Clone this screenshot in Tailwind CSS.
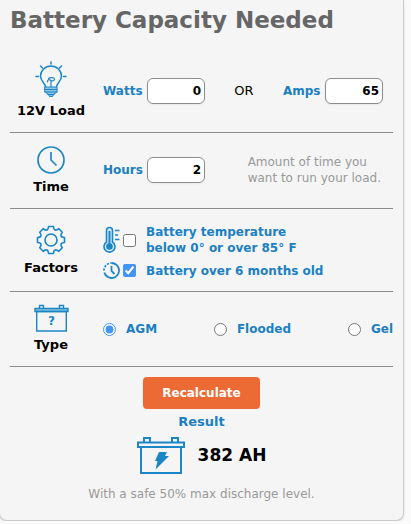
<!DOCTYPE html>
<html lang="en">
<head>
    <meta charset="UTF-8">
    <meta name="viewport" content="width=device-width, initial-scale=1.0">
    <title>Battery Capacity Calculator</title>
    <script src="https://cdn.jsdelivr.net/npm/@tailwindcss/browser@4"></script>
</head>
<body class="bg-[#fafafa] font-['Verdana','DejaVu_Sans',sans-serif] text-xs text-black">

    <form class="-ml-px mr-[7px] rounded-b-lg border border-t-0 border-[#cccccc] bg-[#f5f5f5] px-[10px] pb-[18px] shadow-sm">
        <h1 class="pt-1 text-[23px] leading-8 font-bold whitespace-nowrap text-[#666666]">Battery Capacity Needed</h1>

        <!-- Load -->
        <section class="flex h-[97px] items-end border-b border-[#8c8c8c] pb-2">
            <div class="flex w-[82px] flex-col items-center">
                <svg class="h-[37px] w-8" viewBox="0 0 32 37" fill="none" stroke="#1b86c7" stroke-width="1.5" stroke-linecap="round">
                    <path d="M16 1v2M5.500 5l2 2M26.500 5l-2 2M1 15.500h2.500M28.500 15.500H31"/>
                    <path d="M10.500 26c0-4-5-5.500-5-11a10.500 10 0 0 1 21 0c0 5.500-5 7-5 11"/>
                    <path d="M16 26v-6M12.500 21c0-3 2-2.500 3.500-1.500s3.500 0 3.500-1.500-4-2-6-.5" stroke-width="1.200"/>
                    <path d="M10 26h12v5l-3 2-1.500 2.500h-3L13 33l-3-2z" fill="#8fc4e4" stroke-width="1"/>
                    <path d="M10 28.500h12M10 31h12M13 33.500h6" stroke-width="1.200"/>
                </svg>
                <h2 class="text-[13px] leading-[26px] font-bold whitespace-nowrap">12V Load</h2>
            </div>
            <div class="mb-5 ml-[11px] flex flex-1 items-center justify-between pr-[10px]">
                <div class="flex items-center">
                    <label for="watts" class="w-11 font-bold text-[#1b80c2]">Watts</label>
                    <input id="watts" type="text" value="0" class="h-[26px] w-[58px] rounded-md border border-[#8c8c8c] bg-white px-[3px] text-right font-bold shadow-xs">
                </div>
                <span class="text-[13px]">OR</span>
                <div class="flex items-center">
                    <label for="amps" class="w-[42px] font-bold text-[#1b80c2]">Amps</label>
                    <input id="amps" type="text" value="65" class="h-[26px] w-[58px] rounded-md border border-[#8c8c8c] bg-white px-[3px] text-right font-bold shadow-xs">
                </div>
            </div>
        </section>

        <!-- Time -->
        <section class="flex h-[76px] items-end border-b border-[#8c8c8c] pb-2">
            <div class="flex w-[82px] flex-col items-center">
                <svg class="size-7" viewBox="0 0 28 28" fill="none" stroke="#1b86c7" stroke-width="1.7">
                    <circle cx="14" cy="14" r="13"/>
                    <path d="M14 6v8l5.500 5.500"/>
                </svg>
                <h2 class="text-[13px] leading-[26px] font-bold">Time</h2>
            </div>
            <div class="mb-[14px] ml-[11px] flex flex-1 items-center justify-between pr-3">
                <div class="flex items-center">
                    <label for="hours" class="w-11 font-bold text-[#1b80c2]">Hours</label>
                    <input id="hours" type="text" value="2" class="h-[26px] w-[58px] rounded-md border border-[#8c8c8c] bg-white px-[3px] text-right font-bold shadow-xs">
                </div>
                <p class="leading-4 whitespace-nowrap text-[#999999]">Amount of time you<br>want to run your load.</p>
            </div>
        </section>

        <!-- Factors -->
        <section class="flex h-[83px] items-end border-b border-[#8c8c8c] pb-[10px]">
            <div class="flex w-[82px] flex-col items-center">
                <svg class="size-[30px]" viewBox="-15 -15 30 30" fill="none" stroke="#1b86c7" stroke-width="1.600" stroke-linejoin="round">
                    <path d="M-2.500-13.500L2.500-13.500Q2.500-10.800 4-10Q5.600-9.500 7.800-11.300L11.300-7.800Q9.500-5.600 10-4Q10.800-2.500 13.500-2.500L13.500 2.500Q10.800 2.500 10 4Q9.500 5.600 11.300 7.800L7.800 11.300Q5.600 9.500 4 10Q2.500 10.800 2.500 13.500L-2.500 13.500Q-2.500 10.800-4 10Q-5.600 9.500-7.800 11.300L-11.300 7.800Q-9.500 5.600-10 4Q-10.800 2.500-13.500 2.500L-13.500-2.500Q-10.800-2.500-10-4Q-9.500-5.600-11.300-7.800L-7.800-11.300Q-5.600-9.500-4-10Q-2.500-10.800-2.500-13.500z"/>
                    <circle cx="0" cy="0" r="6"/>
                </svg>
                <h2 class="text-[13px] leading-[26px] font-bold">Factors</h2>
            </div>
            <div class="mb-[2px] ml-[11px] flex flex-1 flex-col gap-[6px]">
                <div class="flex items-center">
                    <svg class="h-7 w-[17px]" viewBox="0 0 17 28" fill="none" stroke="#1b86c7" stroke-width="1.600">
                        <path d="M3.500 16V4.500a3 3 0 0 1 6 0V16a5.500 5.500 0 1 1-6 0z" fill="#d3e8f5"/>
                        <path d="M6.500 5v14" stroke-width="2"/>
                        <circle cx="6.500" cy="20.500" r="2.500" fill="#1b86c7"/>
                        <path d="M12 4.500h4.500M12 9h3M12 13.500h4.500"/>
                    </svg>
                    <input id="temperature" type="checkbox" class="ml-[3px] size-[13px] accent-[#4294f7]">
                    <label for="temperature" class="ml-[10px] leading-4 font-bold whitespace-nowrap text-[#1b80c2]">Battery temperature<br>below 0° or over 85° F</label>
                </div>
                <div class="flex items-center">
                    <svg class="size-[17px]" viewBox="0 0 17 17" fill="none" stroke="#1b86c7" stroke-width="1.800">
                        <path d="M8.500 1a7.500 7.500 0 1 1-7.200 9.500"/>
                        <path d="M1 8.500a7.500 7.500 0 0 1 7.500-7.500" stroke-dasharray="2 1.500"/>
                        <path d="M8.500 4v5l3 3"/>
                    </svg>
                    <input id="age" type="checkbox" checked class="ml-[3px] size-[13px] accent-[#4294f7]">
                    <label for="age" class="ml-[10px] leading-4 font-bold whitespace-nowrap text-[#1b80c2]">Battery over 6 months old</label>
                </div>
            </div>
        </section>

        <!-- Type -->
        <section class="flex h-[75px] items-end border-b border-[#8c8c8c] pb-2">
            <div class="flex w-[82px] flex-col items-center">
                <svg class="h-7 w-[35px]" viewBox="0 0 35 28" fill="none" stroke="#1b86c7" stroke-width="1.400">
                    <path d="M5.500 4V1.500h4V4M25.500 4V1.500h4V4"/>
                    <path d="M1 4.500h33v3H1z" fill="#8fc4e4"/>
                    <path d="M2.700 7.500h29.600V27H2.700z"/>
                    <text x="17.500" y="21" text-anchor="middle" font-family="Verdana, DejaVu Sans, sans-serif" font-size="12" font-weight="bold" fill="#1b86c7" stroke="none">?</text>
                </svg>
                <h2 class="text-[13px] leading-[26px] font-bold">Type</h2>
            </div>
            <fieldset class="mb-[21px] ml-[11px] flex flex-1 justify-between font-bold text-[#1b80c2]">
                <label class="flex items-center gap-[10px]"><input type="radio" name="type" checked class="size-[13px] accent-[#4294f7]">AGM</label>
                <label class="flex items-center gap-[10px]"><input type="radio" name="type" class="size-[13px] accent-[#4294f7]">Flooded</label>
                <label class="flex items-center gap-[10px]"><input type="radio" name="type" class="size-[13px] accent-[#4294f7]">Gel</label>
            </fieldset>
        </section>

        <!-- Result -->
        <div class="flex flex-col items-center pt-[10px]">
            <button type="button" class="h-8 w-[117px] rounded-sm bg-[#ec6b34] font-bold text-white">Recalculate</button>
            <h2 class="text-[13px] leading-[26px] font-bold text-[#1b80c2]">Result</h2>
            <div class="mt-[2px] flex items-center gap-[13px]">
                <svg class="h-[37px] w-12" viewBox="0 0 48 37" fill="none" stroke="#1b86c7" stroke-width="2">
                    <path d="M7 5V1h6v4M35 5V1h6v4"/>
                    <path d="M1 5.500h46V10H1z"/>
                    <path d="M4 10h40v26H4z"/>
                    <path d="M22 15h8l-2 4h4L18.500 32.500l2-8.500h-2.500z" fill="#1b86c7" stroke="none"/>
                </svg>
                <output class="text-[17px] font-bold">382 AH</output>
            </div>
            <p class="mt-3 leading-4 whitespace-nowrap text-[#999999]">With a safe 50% max discharge level.</p>
        </div>
    </form>

</body>
</html>
